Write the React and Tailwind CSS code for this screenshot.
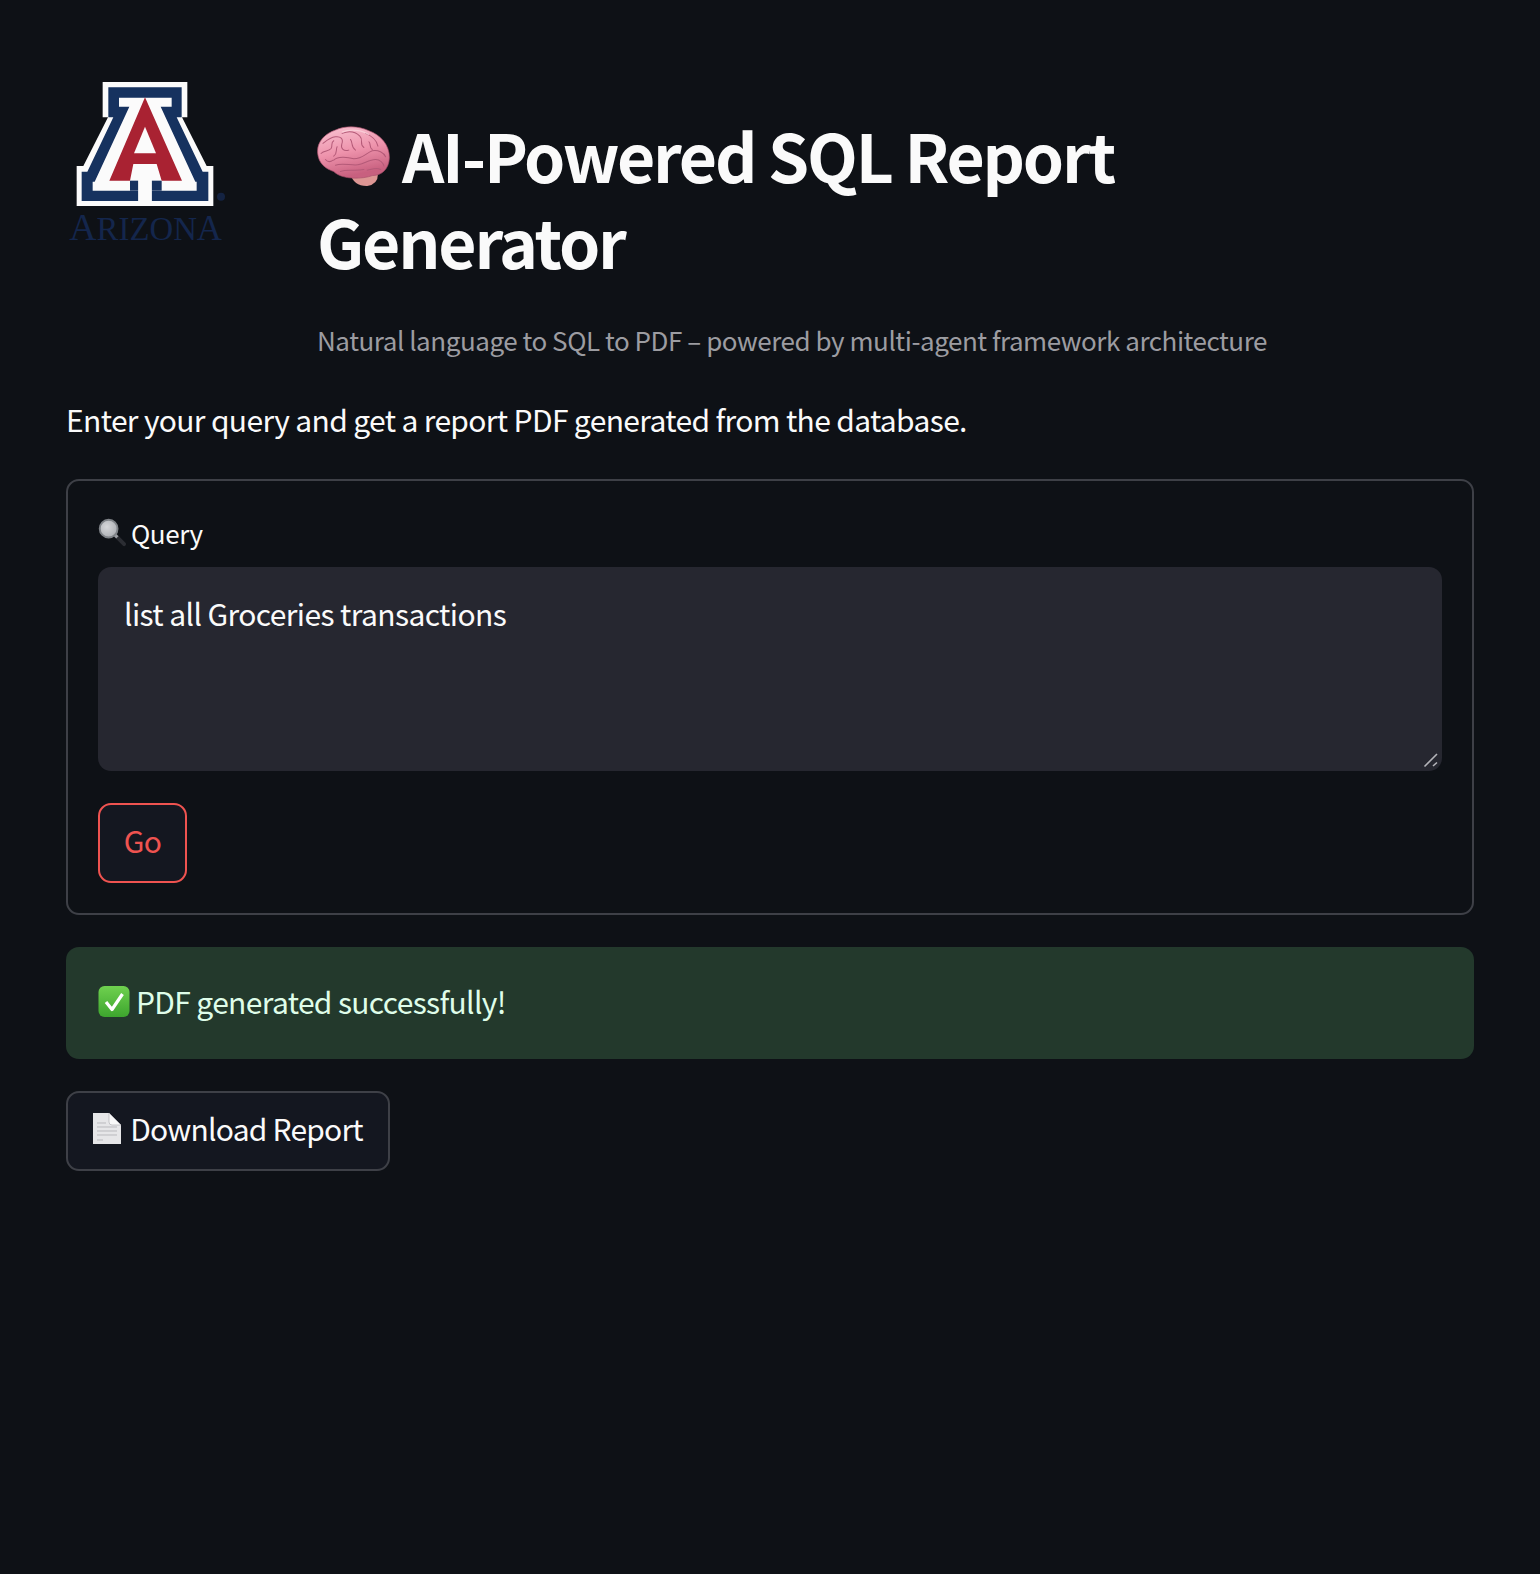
const FONT = "font-['Noto_Sans_CJK_SC','Noto_Sans',sans-serif]";

function Logo() {
  return (
    <svg viewBox="48 0 600 600" className="w-[200px] h-[200px] block overflow-visible">
      <defs>
        <filter id="soft"><feGaussianBlur stdDeviation="1.6" /></filter>
      </defs>
      <g filter="url(#soft)">
        <polygon fill="#fbfbfb" points="158,66 412,66 412,172 396,172 470,318 490,318 490,438 80,438 80,318 100,318 174,172 158,172" />
        <polygon fill="#15305f" points="175,82 395,82 395,172 380,172 458,335 475,335 475,423 305,423 305,362 265,362 265,423 95,423 95,335 112,335 190,172 175,172" />
        <polygon fill="#fbfbfb" points="207,113 365,113 365,140 332,140 436,365 440,365 440,392 128,392 128,365 134,365 238,140 207,140" />
        <rect x="240" y="362" width="25" height="30" fill="#15305f" />
        <rect x="305" y="362" width="30" height="30" fill="#15305f" />
        <rect x="265" y="360" width="40" height="78" fill="#fbfbfb" />
        <polygon fill="#a92232" points="285,112 396,362 335,362 320,312 250,312 240,362 178,362" />
        <polygon fill="#fbfbfb" points="285,200 318,280 252,280" />
      </g>
      <text x="58" y="540" textLength="458" lengthAdjust="spacingAndGlyphs" fill="#14264c" fontFamily="'Liberation Serif',serif" fontSize="100"><tspan fontSize="115">A</tspan>RIZON<tspan fontSize="106">A</tspan></text>
      <circle cx="513" cy="410" r="12" fill="#172a52" opacity="0.75" />
    </svg>
  );
}

function Brain() {
  return (
    <svg viewBox="50 78 218 182" className="inline-block w-[73px] h-[61px] align-[-4px] mr-[12px]">
      <defs>
        <linearGradient id="bg" x1="0" y1="0" x2="0.3" y2="1">
          <stop offset="0" stopColor="#f8c4d2" />
          <stop offset="0.55" stopColor="#ee93ac" />
          <stop offset="1" stopColor="#c8607f" />
        </linearGradient>
      </defs>
      <path d="M150 222 Q160 258 200 257 Q232 252 232 222 Z" fill="#dd9694" />
      <path fill="url(#bg)" stroke="#a9506c" strokeWidth="2" d="M52 160 C48 125 75 100 105 90 C135 76 175 78 205 92 C240 105 268 135 266 175 C264 205 245 226 215 226 C190 236 125 240 100 214 C75 205 55 190 52 160 Z" />
      <g fill="none" stroke="#b45a78" strokeWidth="3" strokeLinecap="round" strokeLinejoin="round">
        <path d="M100 180 C112 168 140 170 160 176 C185 176 195 160 215 152 C232 148 250 158 255 170" />
        <path d="M105 195 C125 188 150 196 172 194 C190 192 205 178 225 178 C238 178 248 188 250 198" />
        <path d="M120 214 C140 206 165 214 190 208" />
        <path d="M68 130 C78 122 88 112 105 110 C120 108 130 116 124 132 C120 145 130 155 145 150" />
        <path d="M125 100 C145 92 165 96 178 108 C190 120 175 132 190 142" />
        <path d="M62 160 C72 150 85 155 92 145 C98 135 90 128 100 122" />
        <path d="M150 118 C158 128 150 140 165 150" />
        <path d="M195 100 C215 108 228 120 232 138" />
        <path d="M75 178 C82 186 90 186 98 180" />
        <path d="M205 125 C212 132 205 142 215 148" />
        <path d="M110 140 C105 150 112 160 100 168" />
        <path d="M200 210 C215 208 225 200 240 208" />
      </g>
      <path d="M125 96 C150 86 185 90 205 104" fill="none" stroke="#fbd8e0" strokeWidth="4" opacity="0.7" />
    </svg>
  );
}

function Magnifier() {
  return (
    <svg viewBox="0 0 30 30" className="w-[29px] h-[29px] shrink-0">
      <defs>
        <radialGradient id="lens" cx="0.4" cy="0.4" r="0.7">
          <stop offset="0" stopColor="#d6d7da" />
          <stop offset="1" stopColor="#a8abb0" />
        </radialGradient>
      </defs>
      <path d="M18.5 18.5 L27 27" stroke="#2b2d33" strokeWidth="4" strokeLinecap="round" />
      <path d="M17 17 L20 20" stroke="#9a9da3" strokeWidth="3.4" />
      <circle cx="11" cy="11" r="9.2" fill="url(#lens)" stroke="#7f8388" strokeWidth="2" />
    </svg>
  );
}

function Check() {
  return (
    <svg viewBox="0 0 32 32" className="w-[32px] h-[33px] shrink-0">
      <defs>
        <linearGradient id="cg" x1="0" y1="0" x2="0" y2="1">
          <stop offset="0" stopColor="#6fd14f" />
          <stop offset="1" stopColor="#3da52e" />
        </linearGradient>
      </defs>
      <rect x="0.5" y="0.5" width="31" height="31" rx="6" fill="url(#cg)" />
      <path d="M8 16.5 L14 24 L24.5 8.5" fill="none" stroke="#fff" strokeWidth="3.2" strokeLinejoin="round" />
    </svg>
  );
}

function Doc() {
  return (
    <svg viewBox="0 0 28 31" className="w-[28px] h-[31px] shrink-0">
      <path d="M0 0 H16 L28 12 V31 H0 Z" fill="#e6e6e8" />
      <path d="M16 0 L28 12 H19 Q16 12 16 9 Z" fill="#f8f8f8" stroke="#a8a8ac" strokeWidth="0.6" />
      <g stroke="#b9b9bd" strokeWidth="1">
        <path d="M4 10 H13 M4 14 H24 M4 18 H24 M4 22 H24 M4 27 H10" />
      </g>
    </svg>
  );
}

export default function App() {
  return (
    <div className={`min-h-[1574px] bg-[#0e1116] text-[#fafafa] ${FONT} px-[66px] pt-[60px]`}>
      <div className="flex">
        <div className="w-[251px] shrink-0"><Logo /></div>
        <div className="flex-1 pt-[51px]">
          <h1 className="text-[66px] leading-[86px] font-bold tracking-[-2.2px] w-[900px]"><Brain />AI-Powered SQL Report Generator</h1>
          <p className="mt-[37px] text-[26px] leading-[40px] tracking-[-0.46px] text-[#9c9ca1]">Natural language to SQL to PDF – powered by multi-agent framework architecture</p>
        </div>
      </div>
      <p className="mt-[35px] text-[30px] leading-[48px] tracking-[-0.65px]">Enter your query and get a report PDF generated from the database.</p>
      <div className="mt-[36px] h-[436px] rounded-[13px] border-2 border-[#3e4047] px-[30px] pt-[36px]">
        <div className="flex items-center gap-[4px] h-[30px] text-[26px] tracking-[-0.45px]">
          <Magnifier />
          <span>Query</span>
        </div>
        <div className="relative mt-[20px]">
          <textarea
            defaultValue="list all Groceries transactions"
            className="block w-full h-[204px] rounded-[13px] bg-[#262730] px-[26px] py-[23px] text-[30px] leading-[46px] tracking-[-0.6px] text-[#fafafa] outline-none resize-none"
          />
          <svg viewBox="0 0 16 16" className="absolute right-[3px] bottom-[3px] w-[16px] h-[16px]">
            <path d="M1.5 14.5 L14 2 M10 14 L14 10.5" stroke="#b4b4b9" strokeWidth="1.6" fill="none" />
          </svg>
        </div>
        <button className="mt-[32px] block w-[89px] h-[80px] pb-[6px] rounded-[13px] border-2 border-[#ef5350] bg-[#141720] text-[30px] tracking-[-0.6px] text-[#ef5350]">Go</button>
      </div>
      <div className="mt-[32px] h-[112px] pb-[4px] rounded-[13px] bg-[#23392c] pl-[32px] pr-[31px] flex items-center gap-[6px] text-[30px] tracking-[-0.65px] text-[#dffde9]">
        <Check />
        <span>PDF generated successfully!</span>
      </div>
      <button className="mt-[32px] w-[324px] h-[80px] pb-[6px] rounded-[13px] border-2 border-[#3e4047] bg-[#141720] flex items-center justify-center gap-[9px] text-[30px] tracking-[-0.8px]">
        <Doc />
        <span>Download Report</span>
      </button>
    </div>
  );
}
